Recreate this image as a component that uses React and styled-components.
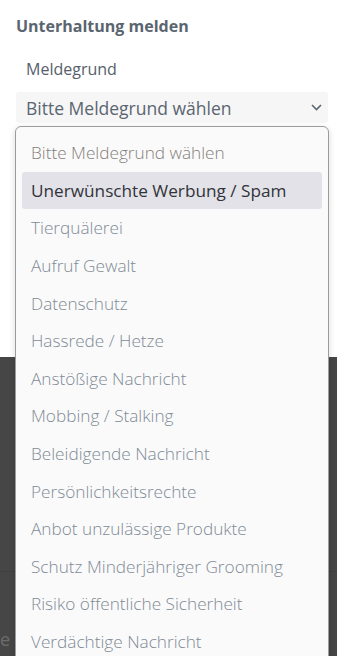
import React from "react";
import styled, { createGlobalStyle } from "styled-components";

const GlobalStyle = createGlobalStyle`
  html, body {
    margin: 0;
    padding: 0;
    background: #454645;
  }
  body {
    font-family: "Open Sans", "Noto Sans", Arial, sans-serif;
  }
`;

const Page = styled.div`
  position: relative;
  width: 337px;
  height: 656px;
  overflow: hidden;
  background: #454645;
`;

const Sheet = styled.section`
  background: #ffffff;
  height: 357px;
  padding: 15px 9px 0 16px;
  box-sizing: border-box;
`;

const Title = styled.h2`
  margin: 0;
  font-size: 16px;
  line-height: 22px;
  font-weight: 700;
  color: #5a6570;
`;

const Label = styled.div`
  margin: 21px 0 0 10px;
  font-size: 16px;
  line-height: 22px;
  color: #56616b;
`;

const Select = styled.div`
  margin-top: 12px;
  height: 31px;
  display: flex;
  align-items: center;
  justify-content: space-between;
  padding: 0 6px 0 10px;
  background: #f6f6f7;
  border-radius: 3px;
  font-size: 17.5px;
  color: #5a6570;
`;

const Backdrop = styled.div`
  height: 299px;
  display: flex;
  flex-direction: column;
`;

const BackdropTop = styled.div`
  height: 214px;
  border-bottom: 1px solid #3f403f;
`;

const BackdropText = styled.div`
  margin-top: 56px;
  font-size: 18px;
  line-height: 22px;
  color: #6b6c6b;
  white-space: nowrap;
`;

const Menu = styled.ul`
  position: absolute;
  top: 126px;
  left: 15px;
  width: 314px;
  height: 560px;
  margin: 0;
  padding: 7px 6px;
  box-sizing: border-box;
  list-style: none;
  background: #fafafa;
  border: 1px solid #9c9c9c;
  border-radius: 6px;
  box-shadow: 0 2px 6px rgba(0, 0, 0, 0.15);
`;

const Item = styled.li`
  height: 37.6px;
  display: flex;
  align-items: center;
  padding-left: 9px;
  border-radius: 3px;
  font-size: 17.2px;
  font-weight: ${(p) => (p.active ? 400 : 300)};
  white-space: nowrap;
  background: ${(p) => (p.active ? "#e3e2e8" : "transparent")};
  color: ${(p) => (p.active ? "#30343a" : p.muted ? "#857f7a" : "#7f8b96")};
`;

const Chevron = () => (
  <svg width="11" height="7" viewBox="0 0 11 7" fill="none">
    <path d="M1 1l4.5 4.5L10 1" stroke="#5a6570" strokeWidth="1.6" />
  </svg>
);

const reasons = [
  "Unerwünschte Werbung / Spam",
  "Tierquälerei",
  "Aufruf Gewalt",
  "Datenschutz",
  "Hassrede / Hetze",
  "Anstößige Nachricht",
  "Mobbing / Stalking",
  "Beleidigende Nachricht",
  "Persönlichkeitsrechte",
  "Anbot unzulässige Produkte",
  "Schutz Minderjähriger Grooming",
  "Risiko öffentliche Sicherheit",
  "Verdächtige Nachricht",
];

export default function App() {
  return (
    <Page>
      <GlobalStyle />
      <Sheet>
        <Title>Unterhaltung melden</Title>
        <Label>Meldegrund</Label>
        <Select>
          Bitte Meldegrund wählen
          <Chevron />
        </Select>
      </Sheet>
      <Backdrop>
        <BackdropTop />
        <BackdropText>e h</BackdropText>
      </Backdrop>
      <Menu>
        <Item muted>Bitte Meldegrund wählen</Item>
        {reasons.map((r, i) => (
          <Item key={r} active={i === 0}>
            {r}
          </Item>
        ))}
      </Menu>
    </Page>
  );
}
